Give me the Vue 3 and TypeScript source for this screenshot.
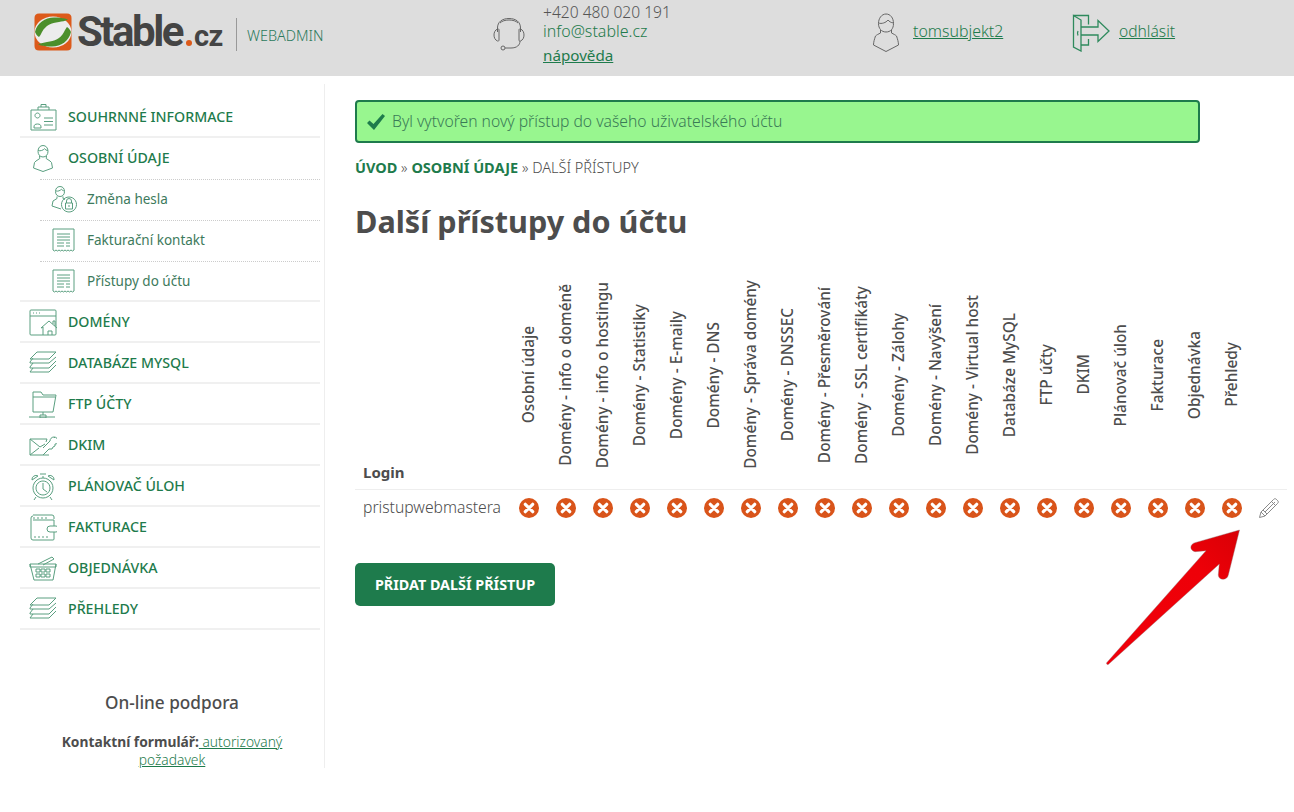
<script setup lang="ts">
interface NavItem { label: string; paths: string[]; sub?: boolean; parent?: boolean; last?: boolean }

const person = ['M14 13c-3 0-5-2.400-5-5.700S11 1.500 14 1.500s5 2.500 5 5.800-2 5.700-5 5.700z', 'M9.200 6.500c2 .8 5-.2 6.300-1.800 .8 1 2 1.800 3.300 2', 'M10.500 12l.3 2.500-3.800 2.500-1.500 1.500-1 5.500 9.500 3.500 9.500-3.500-1-5.500-1.500-1.500-3.800-2.500.3-2.500']
const sheet = ['M4 3h21v21l-1.500 1-1.500-1-1.500 1-1.500-1-1.500 1-1.500-1-1.500 1-1.500-1-1.500 1-1.500-1-1.500 1-1.500-1-1.500 1-1.500-1z', 'M8 8h13M8 11h13M8 14h13M8 17h7M17 17h4M8 20h7M17 20h4']
const stack = ['M8 3h19l-7 7H1z', 'M4 9l-3 4 0 1h19l7-6', 'M4 14l-3 4v1h19l7-7', 'M4 19l-3 4h19l7-7']

const nav: NavItem[] = [
  { label: 'Souhrnné informace', paths: ['M2 7h25v20H2z', 'M9 7V4h11v3', 'M12 4V1.500h5V4', 'M8.500 15a2.500 2.500 0 1 0-.01 0zM5 24c0-2 1-3 3.500-3s3.500 1 3.500 3v1H5z', 'M15 15h9M15 18.500h9M15 22h9'] },
  { label: 'Osobní údaje', parent: true, paths: person },
  { label: 'Změna hesla', sub: true, paths: ['M11 11.500c-3 0-4.500-2.300-4.500-5S8 1.500 11 1.500s4.500 2.300 4.500 5-1.500 5-4.500 5z', 'M7 6c2 .5 4-.3 5.500-1.800.5 1 1.500 1.600 3 1.800', 'M8 11.500v2l-4 2.500-1 5 9 3', 'M14 11.500v2l2 1', 'M20 27a7.500 7.500 0 1 0-.01 0z', 'M16.500 18h7v6h-7zM17.500 18v-2a2.500 2.500 0 0 1 5 0v2', 'M20 20v2'] },
  { label: 'Fakturační kontakt', sub: true, paths: sheet },
  { label: 'Přístupy do účtu', sub: true, last: true, paths: sheet },
  { label: 'Domény', paths: ['M2 2h24a1 1 0 0 1 1 1v23a1 1 0 0 1-1 1H2a1 1 0 0 1-1-1V3a1 1 0 0 1 1-1z', 'M1 8h26', 'M4 5h1M7 5h1M10 5h1', 'M14 27V19l-2 1 8-7 8 7', 'M24 16v-3h2v5', 'M19 27v-4h4v4'] },
  { label: 'Databáze MySQL', paths: stack },
  { label: 'FTP účty', paths: ['M4 2h8l2 3h13l-3 17H4z', 'M4 7h22', 'M0 27h26', 'M14 22v3', 'M11 25h6v3h-6z'] },
  { label: 'DKIM', paths: ['M1 8h17l-1 3M1 8v16h19', 'M1 8l10 8 5-3', 'M1 24l9-7', 'M14 24l6-6h3l1-2 2-1v-2c2 0 3-1 3-3s-1.500-4-4-4-4 2-4 4l-7 7', 'M25 6.500h1'] },
  { label: 'Plánovač úloh', paths: ['M14 26a10 10 0 1 0-.01 0z', 'M14 23a7 7 0 1 0-.01 0z', 'M14 11v6l4 3', 'M3 8a4 4 0 0 1 6-4zM25 8a4 4 0 0 0-6-4z', 'M7 25l-2 3M21 25l2 3', 'M14 6V4M11 2h6'] },
  { label: 'Fakturace', paths: ['M4 2h19a2 2 0 0 1 2 2v2M2 5a2 2 0 0 1 2-2M2 5v20a2 2 0 0 0 2 2h20a1 1 0 0 0 1-1v-7', 'M4 7h21v6', 'M4 5h2M8 5h2M12 5h2M16 5h2', 'M21 13h6a2.500 2.500 0 0 1 0 6h-6a3 3 0 0 1 0-6z', 'M5 24h2M9 24h2M13 24h2M17 24h2'] },
  { label: 'Objednávka', paths: ['M1 10h26l-3 16H5z', 'M1 10v3h26v-3', 'M9 10l14-7 2 2-11 6', 'M7 15h4v3H7zM12 15h4v3h-4zM17 15h4v3h-4zM7 20h4v3H7zM12 20h4v3h-4zM17 20h4v3h-4z'] },
  { label: 'Přehledy', paths: stack },
]

const permissions: string[] = [
  'Osobní údaje', 'Domény - info o doméně', 'Domény - info o hostingu', 'Domény - Statistiky',
  'Domény - E-maily', 'Domény - DNS', 'Domény - Správa domény', 'Domény - DNSSEC',
  'Domény - Přesměrování', 'Domény - SSL certifikáty', 'Domény - Zálohy', 'Domény - Navýšení',
  'Domény - Virtual host', 'Databáze MySQL', 'FTP účty', 'DKIM', 'Plánovač úloh',
  'Fakturace', 'Objednávka', 'Přehledy',
]
</script>

<template>
  <div class="page">
    <header class="top">
      <div class="brand">
        <svg class="mark" width="38" height="38" viewBox="0 0 38 38">
          <path d="M5 0.500h28c3 0 4.500 1.500 4.500 4.500v28c0 3-1.500 4.500-4.500 4.500H5c-3 0-4.500-1.500-4.500-4.500V5C.5 2 2 .5 5 .5z" fill="#dc5a1a" />
          <ellipse cx="19" cy="19" rx="18.500" ry="15.500" fill="#ececec" />
          <path d="M1 19C3 10 11 4.500 20 4.500c5 0 10 .5 14 2-3 1.500-6 2-9 2.500-8 1-13 3-17 10-1 2-2 4-3 5-2-1-3-3-4-5z" fill="#4c8f2b" />
          <path d="M37 19c-2 9-10 14.500-19 14.500-5 0-10-.5-14-2 3-1.500 6-2 9-2.500 8-1 13-3 17-10 1-2 2-4 3-5 2 1 3 3 4 5z" fill="#4c8f2b" />
        </svg>
        <span class="word">Stable<i class="dot"></i><span class="cz">cz</span></span>
        <span class="divider"></span>
        <span class="webadmin">WEBADMIN</span>
      </div>

      <div class="contact">
        <svg width="34" height="34" viewBox="0 0 34 34" fill="none" stroke="#666" stroke-width="1">
          <path d="M5.500 15V11C5.500 5 10 1.500 17 1.500S28.500 5 28.500 11v4" />
          <path d="M8 6c2-2 5-3 9-3s7 1 9 3" />
          <path d="M5.500 12C3 13 2 15.500 2 18s1 5 3.500 6c1 .3 1.500-.3 1.500-1V13c0-1-.7-1.300-1.500-1z" />
          <path d="M28.500 12c2.500 1 3.500 3.500 3.500 6s-1 5-3.500 6c-1 .3-1.500-.3-1.500-1V13c0-1 .7-1.300 1.500-1z" />
          <path d="M28 24c0 4-3 7-9 7h-6" />
          <circle cx="11" cy="31" r="2" />
        </svg>
        <div class="contact-text">
          <span class="phone">+420 480 020 191</span>
          <span class="mail">info@stable.cz</span>
          <a class="help" href="#">nápověda</a>
        </div>
      </div>

      <div class="user">
        <svg width="28" height="40" viewBox="0 0 28 40" fill="none" stroke="#666" stroke-width="1">
          <path d="M14 20c-4.500 0-7.500-3.500-7.500-8.500S9.500 2 14 2s7.500 4 7.500 9.500S18.500 20 14 20z" />
          <path d="M6.500 11c3 1.200 7.500-.3 9.500-3 1.200 1.500 3 2.700 5.500 3" />
          <path d="M8.500 18v3c-2 1-4 2-5 3-1 3-2 6-2 9l12.500 6.500L26.500 33c0-3-1-6-2-9-1-1-3-2-5-3v-3" />
        </svg>
        <a href="#">tomsubjekt2</a>
      </div>

      <div class="logout">
        <svg width="38" height="38" viewBox="0 0 38 38" fill="none" stroke="#2f8a5d" stroke-width="1.300">
          <path d="M1.500 1.500h15v9M16.500 25v6H9" />
          <path d="M1.500 1.500L9 6v31l-7.500-4z" />
          <path d="M9 13h17V6.500L37 17 26 27.500V21H9" />
          <path d="M6 17c-.7 1.500-.7 3 0 4.500" />
        </svg>
        <a href="#">odhlásit</a>
      </div>
    </header>

    <div class="body">
      <aside class="side">
        <nav class="nav">
          <a v-for="item in nav" :key="item.label" href="#" class="row" :class="{ sub: item.sub, parent: item.parent, last: item.last }">
            <svg class="ico" width="28" height="28" viewBox="0 0 28 28" fill="none" stroke="#5a9f80" stroke-width="1">
              <path v-for="d in item.paths" :key="d" :d="d" />
            </svg>
            <span>{{ item.label }}</span>
          </a>
        </nav>
        <div class="support">
          <h3>On-line podpora</h3>
          <p><b>Kontaktní formulář:</b><a href="#"> autorizovaný požadavek</a></p>
        </div>
      </aside>

      <main class="main">
        <div class="alert">
          <svg width="20" height="18" viewBox="0 0 20 18"><path d="M1 10l2.500-2.500L7.500 11 16.500 1l2.500 2L8 17z" fill="#1e7b4c" /></svg>
          <span>Byl vytvořen nový přístup do vašeho uživatelského účtu</span>
        </div>
        <div class="crumbs"><a href="#">ÚVOD</a> » <a href="#">OSOBNÍ ÚDAJE</a> » DALŠÍ PŘÍSTUPY</div>
        <h1>Další přístupy do účtu</h1>

        <table class="grid">
          <thead>
            <tr>
              <th class="login">Login</th>
              <th v-for="p in permissions" :key="p" class="perm"><span>{{ p }}</span></th>
              <th class="edit"></th>
            </tr>
          </thead>
          <tbody>
            <tr>
              <td class="name">pristupwebmastera</td>
              <td v-for="p in permissions" :key="p" class="mark-cell">
                <svg width="20" height="20" viewBox="0 0 20 20">
                  <circle cx="10" cy="10" r="10" fill="#d9541a" />
                  <path d="M6.300 6.300l7.400 7.400M13.700 6.300l-7.400 7.400" stroke="#fff" stroke-width="3.200" stroke-linecap="round" />
                </svg>
              </td>
              <td class="mark-cell">
                <svg width="22" height="22" viewBox="0 0 22 22" fill="none" stroke="#8a8a8a" stroke-width="1">
                  <path d="M15.500 2.500c1-1 2-1 2.700-.3l1.600 1.600c.7.7.7 1.700-.3 2.700L7 19l-5.500 1.500L3 15z" />
                  <path d="M13.500 4.500l4 4M5 13l4 4M3 15l4 4M5 13L15 3M7 15L17 5M9 17L19 7" />
                </svg>
              </td>
            </tr>
          </tbody>
        </table>

        <button class="add" type="button">PŘIDAT DALŠÍ PŘÍSTUP</button>
      </main>
    </div>

    <svg class="arrow" width="140" height="140" viewBox="0 0 140 140">
      <defs>
        <linearGradient id="red" x1="0" y1="1" x2="1" y2="0">
          <stop offset="0" stop-color="#f0000a" />
          <stop offset="0.7" stop-color="#ee0008" />
          <stop offset="1" stop-color="#d80006" />
        </linearGradient>
      </defs>
      <path d="M136.500 2L92 14.700c-5 1.300-6 7.300 0 9l11-1L3.700 134.700c-.7 1.300.8 2.300 1.800 1.600L116.300 36l-1 11c.2 5.500 8.700 6 10 0z" fill="url(#red)" stroke="#8a6a6a" stroke-width=".4" />
    </svg>
  </div>
</template>

<style>
html, body { margin: 0; background: #fff; }
</style>

<style scoped>
.page { position: relative; width: 1294px; height: 812px; overflow: hidden; font-family: "Noto Sans", "Open Sans", sans-serif; color: #4d4d4d; font-size: 14px; }
a { color: #1e7b4c; }

.top { height: 76px; background: #dddddd; display: flex; align-items: flex-start; }
.brand { width: 457px; padding: 13px 0 0 34px; box-sizing: border-box; display: flex; align-items: flex-start; }
.mark { flex: none; }
.word { font-family: Roboto, sans-serif; font-weight: 700; font-size: 42px; line-height: 38px; letter-spacing: -2.500px; color: #444; margin-left: 5px; display: flex; align-items: baseline; width: 146px; flex: none; }
.dot { width: 6px; height: 6px; border-radius: 50%; background: #dc5a1a; margin: 0 2px 8px 4px; flex: none; }
.cz { font-size: 29px; letter-spacing: -.5px; }
.divider { width: 1px; height: 33px; background: #999; margin: 5px 10px 0 13px; flex: none; }
.webadmin { font-size: 14.400px; line-height: 46px; color: #2b7a5c; font-weight: 300; }

.contact { width: 415px; padding: 17px 0 0 35px; box-sizing: border-box; display: flex; gap: 17px; }
.contact-text { display: flex; flex-direction: column; margin-top: -15.500px; }
.phone { color: #555; font-weight: 300; line-height: 21px; font-size: 15.600px; }
.mail { color: #1e7b4c; font-weight: 300; line-height: 17px; font-size: 16px; }
.help { line-height: 31px; color: #1e7b4c; font-size: 15.200px; }

.user { width: 200px; display: flex; gap: 13px; padding: 12px 0 0; box-sizing: border-box; }
.user a, .logout a { font-weight: 300; }
.user a { font-size: 15.900px; line-height: 38px; }
.logout { display: flex; gap: 9px; padding: 14px 0 0; }
.logout a { font-size: 15.600px; line-height: 34px; }

.body { display: flex; align-items: flex-start; }
.side { width: 305px; height: 684px; margin: 8px 0 0 20px; padding-top: 13px; box-sizing: border-box; border-right: 1px solid #eee; }
.nav { width: 300px; }
.row { height: 41px; box-sizing: border-box; border-bottom: 2px solid #f0f0f0; display: flex; align-items: center; gap: 11px; padding: 0 0 0 9px; text-decoration: none; color: #1e7b4c; text-transform: uppercase; font-weight: 500; font-size: 14.200px; }
.row.parent { border-bottom: none; padding-bottom: 2px; }
.row.sub { margin-left: 20px; padding: 0 0 3px 9px; gap: 10px; text-transform: none; font-weight: 400; font-size: 13.500px; border-top: 1px dotted #ccc; border-bottom: none; color: #3d7a5c; position: relative; }
.row.last::after { content: ""; position: absolute; left: -20px; right: 0; bottom: 0; height: 2px; background: #f0f0f0; }
.ico { flex: none; }
.support { margin-top: 61px; text-align: center; }
.support h3 { margin: 0; font-size: 17.200px; line-height: 24px; font-weight: 500; color: #4d4d4d; }
.support p { margin: 18px auto 0; width: 240px; font-size: 13.800px; line-height: 18px; }
.support a { font-weight: 300; }

.main { margin: 24px 0 0 30px; width: 909px; flex: none; }
.alert { width: 845px; height: 43px; box-sizing: border-box; background: #98f68f; border: 2px solid #1e7b4c; border-radius: 4px; display: flex; align-items: center; gap: 6px; padding: 0 0 2px 9px; color: #3a7a56; font-size: 15.700px; font-weight: 300; }
.alert svg { margin-top: 2px; }
.crumbs { margin-top: 14px; line-height: 20px; font-size: 14.500px; font-weight: 300; }
.crumbs a { color: #1e7b4c; font-weight: 700; text-decoration: none; }
h1 { margin: 24px 0 0; font-size: 30.600px; line-height: 40px; font-weight: 700; color: #4d4d4d; }

.grid { margin-top: 20px; border-collapse: collapse; table-layout: fixed; width: 932px; }
th { padding: 0; font-weight: 500; color: #4d4d4d; }
thead tr { height: 228px; border-bottom: 1px solid #eee; }
.login { width: 155px; text-align: left; vertical-align: bottom; padding: 0 0 7px 8px; box-sizing: border-box; font-size: 15px; font-weight: 700; line-height: 20px; }
.perm { width: 37px; vertical-align: middle; }
.perm span { display: inline-block; vertical-align: middle; writing-mode: vertical-rl; transform: rotate(180deg); font-size: 15.400px; line-height: 20px; white-space: nowrap; }
.edit { width: 37px; }
.name { padding: 0 0 3px 8px; font-weight: 300; font-size: 15.700px; height: 38px; box-sizing: border-box; white-space: nowrap; }
.mark-cell { padding: 0; text-align: center; vertical-align: middle; }
.mark-cell svg { display: block; margin: 0 auto; }

.add { display: block; margin-top: 36px; width: 200px; height: 43px; border: none; border-radius: 5px; background: #1e7b4c; color: #fff; font-family: inherit; font-size: 14.350px; font-weight: 700; padding: 0; }

.arrow { position: absolute; left: 1103px; top: 528px; pointer-events: none; }
</style>
